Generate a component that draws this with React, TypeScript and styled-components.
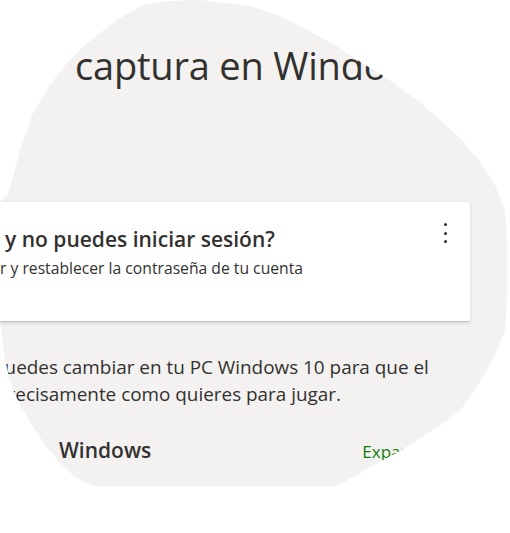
import React from 'react';
import styled, { createGlobalStyle } from 'styled-components';

const GlobalStyle = createGlobalStyle`
  html, body {
    margin: 0;
    padding: 0;
    background: #ffffff;
  }
  body {
    font-family: "Open Sans", "Noto Sans", sans-serif;
    color: #323130;
  }
`;

// outline of the grey backdrop; everything inside is cut to it
const BLOB = `polygon(
  200px 0px, 250px 6px, 280px 16px, 307px 30px, 335px 45px, 362px 63px,
  385px 77px, 417px 100px, 440px 120px, 460px 138px, 480px 162px,
  495px 185px, 505px 210px, 507px 240px, 507px 300px, 505px 330px,
  497px 350px, 488px 368px, 475px 390px, 462px 408px, 448px 420px,
  425px 435px, 400px 451px, 372px 466px, 337px 486px, 93px 486px,
  75px 477px, 60px 463px, 45px 445px, 32px 425px, 22px 408px,
  15px 395px, 10px 380px, 5px 360px, 2px 335px, 0px 322px, 0px 202px,
  8px 195px, 13px 177px, 20px 150px, 33px 113px, 50px 85px, 67px 63px,
  85px 45px, 100px 33px, 120px 18px, 143px 5px, 170px 1px
)`;

const Stage = styled.div`
  width: 510px;
  height: 533px;
  overflow: hidden;
`;

const Blob = styled.section`
  width: 510px;
  height: 486px;
  background: #f3f2f1;
  clip-path: ${BLOB};
  display: flex;
  flex-direction: column;
`;

const Title = styled.h1`
  margin: 39px 0 0 75px;
  font-size: 38px;
  line-height: 52px;
  font-weight: 400;
  white-space: nowrap;
  letter-spacing: -0.2px;
`;

const Card = styled.div`
  margin: 111px 0 0 -40px;
  width: 510px;
  height: 119px;
  box-sizing: border-box;
  background: #ffffff;
  border-radius: 2px;
  box-shadow: 0 1.6px 3.6px rgba(0, 0, 0, 0.13), 0 0.3px 0.9px rgba(0, 0, 0, 0.11);
  display: flex;
  justify-content: space-between;
  padding: 22px 20px 0 0;
`;

const CardText = styled.div`
  display: flex;
  flex-direction: column;
  white-space: nowrap;
`;

const Line = styled.div<{ $indent: number }>`
  margin-left: ${p => p.$indent}px;
`;

const CardTitle = styled(Line)`
  font-size: 21px;
  line-height: 30px;
  font-weight: 600;
`;

const CardSub = styled(Line)`
  margin-top: 3px;
  font-size: 15.7px;
  line-height: 22px;
`;

const Kebab = styled.button`
  border: 0;
  background: none;
  margin-top: -3px;
  width: 10px;
  height: 24px;
  display: flex;
  flex-direction: column;
  align-items: center;
  justify-content: space-between;
  padding: 2px 0;
`;

const Dot = styled.span`
  width: 3px;
  height: 3px;
  border-radius: 50%;
  background: #323130;
`;

const Paragraph = styled.div`
  margin-top: 33px;
  font-size: 18.9px;
  line-height: 26.5px;
  white-space: nowrap;
`;

const Section = styled.div`
  margin-top: 29px;
  display: flex;
  align-items: baseline;
  white-space: nowrap;
`;

const SectionTitle = styled.h2`
  margin: 0 0 0 59px;
  font-size: 21px;
  font-weight: 600;
  line-height: 28px;
`;

const Expand = styled.a`
  margin-left: 211px;
  font-size: 17px;
  color: #107c10;
  text-decoration: none;
`;

export default function App() {
  return (
    <>
      <GlobalStyle />
      <Stage>
        <Blob>
          <Title>captura en Windows 10</Title>
          <Card>
            <CardText>
              <CardTitle $indent={45}>y no puedes iniciar sesión?</CardTitle>
              <CardSub $indent={40}>r y restablecer la contraseña de tu cuenta</CardSub>
            </CardText>
            <Kebab aria-label="Más opciones">
              <Dot />
              <Dot />
              <Dot />
            </Kebab>
          </Card>
          <Paragraph>
            <Line $indent={-7}>puedes cambiar en tu PC Windows 10 para que el</Line>
            <Line $indent={-4}>precisamente como quieres para jugar.</Line>
          </Paragraph>
          <Section>
            <SectionTitle>Windows</SectionTitle>
            <Expand href="#">Expandir todo</Expand>
          </Section>
        </Blob>
      </Stage>
    </>
  );
}
